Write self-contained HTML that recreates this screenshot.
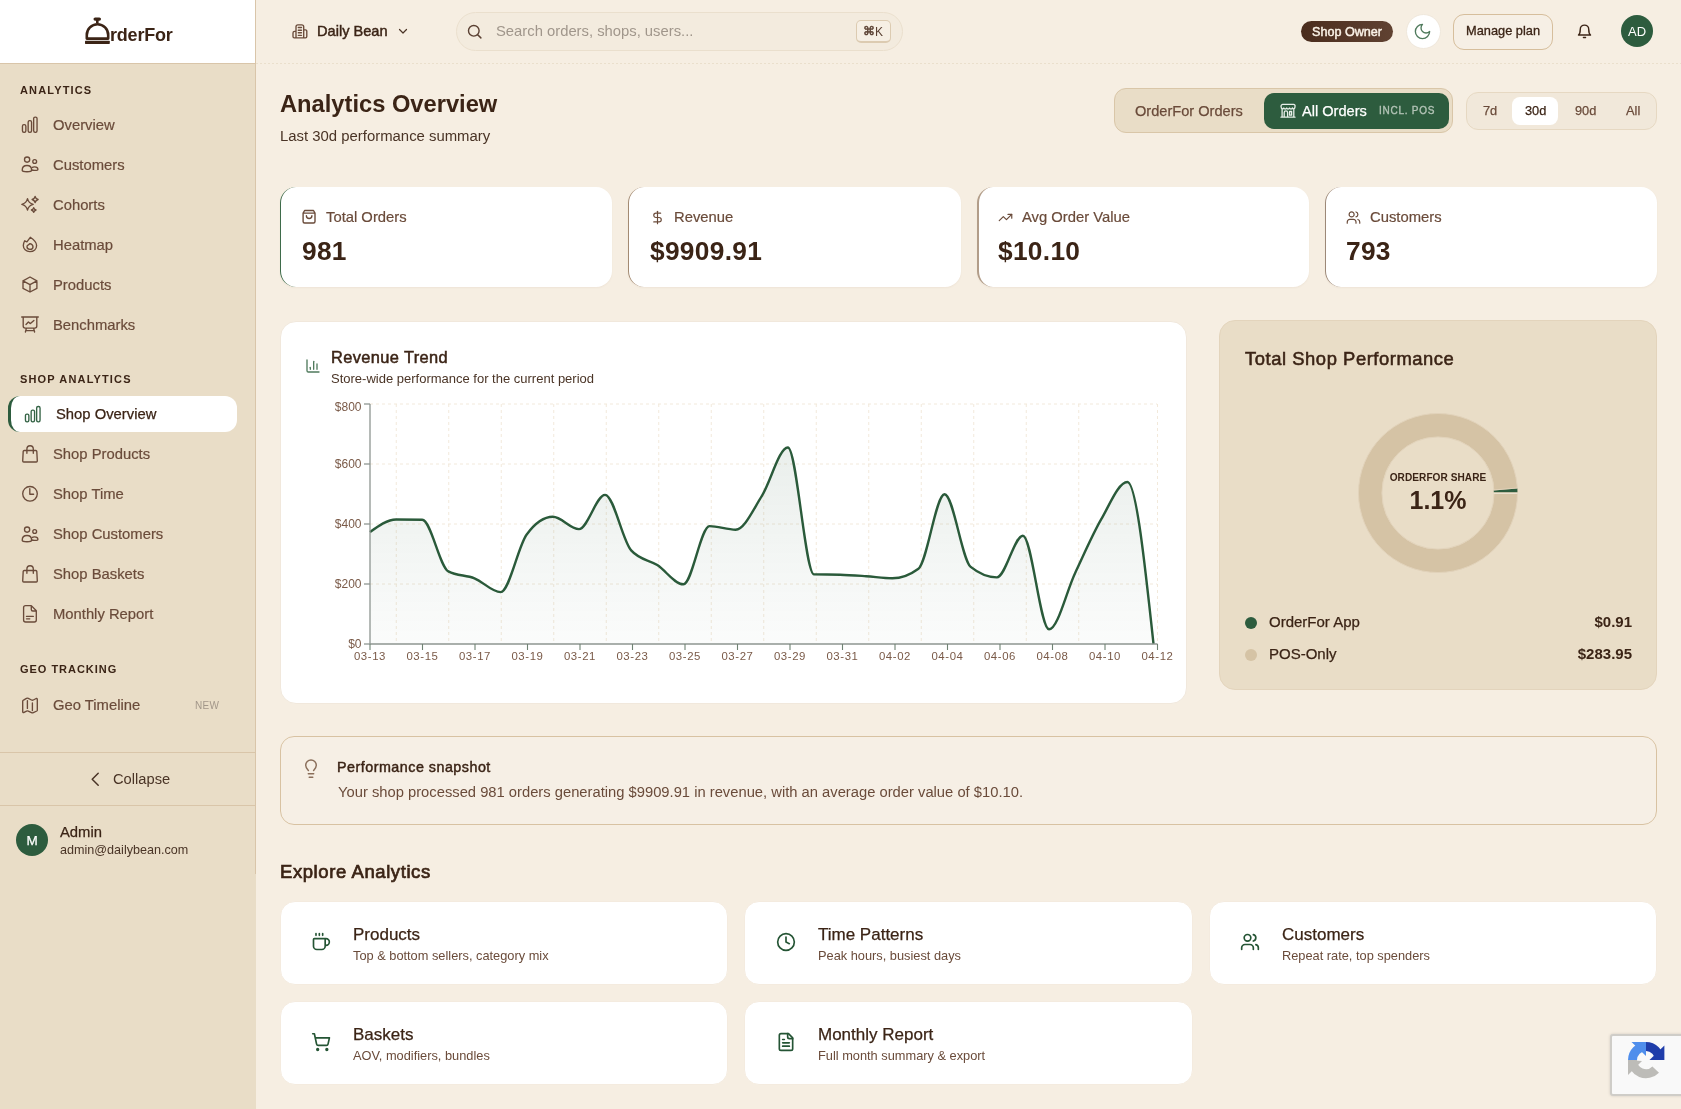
<!DOCTYPE html>
<html><head><meta charset="utf-8">
<style>
*{box-sizing:border-box;margin:0;padding:0}
html,body{width:1681px;height:1109px;overflow:hidden;background:#F6EEE2;font-family:"Liberation Sans",sans-serif;color:#3B2416}
.a{position:absolute}
.t{position:absolute;line-height:1;white-space:nowrap;will-change:transform}
svg{position:absolute;overflow:visible}
.ic{fill:none;stroke-linecap:round;stroke-linejoin:round}
#side{left:0;top:0;width:256px;height:1109px;background:#E9DDC7}
#sideborder{left:255px;top:0;width:1px;height:874px;background:#D9C5A9}
#logo{left:0;top:0;width:255px;height:63px;background:#fff}
#logoline{left:0;top:63px;width:255px;height:1px;background:#D9C5A9}
.sec{font-size:11px;font-weight:700;letter-spacing:1.15px;color:#3B2416}
.it{font-size:14.8px;color:#6A4B3A;-webkit-text-stroke:0.2px #6A4B3A}
.m{-webkit-text-stroke:0.25px currentColor}
.card{position:absolute;background:#fff;border-radius:16px}
</style></head><body>
<div id="side" class="a"></div>
<div id="logo" class="a"></div>
<div id="logoline" class="a"></div>
<div id="sideborder" class="a"></div>
<!-- header bottom dotted line -->
<div class="a" style="left:256px;top:63px;width:1425px;height:1px;background:repeating-linear-gradient(90deg,#EADFCC 0 2px,transparent 2px 4px)"></div>

<!-- Logo -->
<svg style="left:84px;top:16px" width="28" height="29" viewBox="0 0 28 29">
  <rect x="9.5" y="1.5" width="7.5" height="3.2" rx="1.6" fill="#3B2416"/>
  <rect x="12" y="3" width="2.6" height="4" fill="#3B2416"/>
  <path d="M2.8 22.6 V19 A10.7 10.7 0 0 1 24.2 19 V22.6 Z" fill="none" stroke="#3B2416" stroke-width="2.6" stroke-linejoin="round"/>
  <rect x="1" y="24.7" width="24.8" height="3.2" rx="0.6" fill="#3B2416"/>
</svg>
<div class="t" style="left:110px;top:25.5px;font-size:18px;font-weight:700;letter-spacing:-0.2px;color:#3B2416">rderFor</div>


<!-- Sidebar nav -->
<svg style="left:0;top:0;z-index:3" width="256" height="760" viewBox="0 0 256 760" class="ic" stroke="#6A4B3A" stroke-width="1.35">
 <rect x="22.45" y="124.65" width="3.4" height="7.7" rx="1.5"/><rect x="28.15" y="120.65" width="3.4" height="11.7" rx="1.5"/><rect x="33.65" y="117.05" width="3.4" height="15.3" rx="1.5"/>
 <g transform="translate(0 0)"><circle cx="27.1" cy="159.6" r="2.6"/><circle cx="34.7" cy="161.5" r="1.9"/>
<path d="M22.2 170.2 C22.2 167.2 24.4 165.5 27 165.5 C29.6 165.5 31.6 167.2 31.6 170.2 C31.6 171.6 29.5 171.7 27 171.7 C24.4 171.7 22.2 171.6 22.2 170.2Z"/>
<path d="M32.2 167.5 C32.8 166.9 33.6 166.8 34.6 166.8 C36.6 166.8 37.9 168.2 37.9 169.4 C37.9 170.2 36.4 170.3 34.6 170.3 C33.4 170.3 32.4 170.2 31.9 170"/></g>
 <path d="M27.5 198.70000000000002 Q28.6 203.3 33.2 204.4 Q28.6 205.5 27.5 210.1 Q26.4 205.5 21.8 204.4 Q26.4 203.3 27.5 198.70000000000002Z"/><path d="M35.1 196.5 Q35.7 198.9 38.1 199.5 Q35.7 200.1 35.1 202.5 Q34.5 200.1 32.1 199.5 Q34.5 198.9 35.1 196.5Z"/><path d="M33.7 207.7 Q34.2 209.5 36.0 210 Q34.2 210.5 33.7 212.3 Q33.2 210.5 31.400000000000002 210 Q33.2 209.5 33.7 207.7Z"/>
 <path d="M26.9 241.9 L30.3 237.3 C33 239.1 36.6 241.6 36.6 245.6 C36.6 249.1 33.8 251.6 29.9 251.6 C26 251.6 23.3 248.9 23.3 245.6 C23.3 243.6 24 242.1 24.7 240.8 Z"/>
 <path d="M27.2 245.8 L30 243.6 C31.8 244.1 33 245.6 33 246.9 C33 248.4 31.6 249.3 30 249.3 C28.4 249.3 27 248.3 27 246.8 Z"/>
 <path d="M30 277 L36.9 280.8 V288.4 L30 292 L23 288.4 V280.8 Z M23 280.8 L30 284.6 L36.9 280.8 M30 284.6 V292"/>
 <path d="M21.7 317 H38.3 M23.2 317 V326.1 A2 2 0 0 0 25.2 328.1 H34.8 A2 2 0 0 0 36.8 326.1 V317 M26.4 328.1 L25.4 332 M33.6 328.1 L34.6 332 M26.6 330.6 H33.4 M26 324.5 L28.4 322 L30.4 323.6 L33.9 320.4"/>
 <g stroke="#356446"><rect x="25.45" y="414.1" width="3.4" height="7.7" rx="1.5"/><rect x="31.15" y="410.1" width="3.4" height="11.7" rx="1.5"/><rect x="36.65" y="406.5" width="3.4" height="15.3" rx="1.5"/></g>
 <g transform="translate(0 0)"><path d="M24.2 450.5 H35.8 A1 1 0 0 1 36.8 451.4 L37.3 461 A1 1 0 0 1 36.3 462 H23.7 A1 1 0 0 1 22.7 461 L23.2 451.4 A1 1 0 0 1 24.2 450.5Z"/><path d="M26.9 453.3 V448.9 A3.2 3.2 0 0 1 33.3 448.9 V453.3"/></g>
 <circle cx="30" cy="493.8" r="7.3"/><path d="M29.8 488.6 V494.2 H33.6"/>
 <g transform="translate(0 370)"><circle cx="27.1" cy="159.6" r="2.6"/><circle cx="34.7" cy="161.5" r="1.9"/>
<path d="M22.2 170.2 C22.2 167.2 24.4 165.5 27 165.5 C29.6 165.5 31.6 167.2 31.6 170.2 C31.6 171.6 29.5 171.7 27 171.7 C24.4 171.7 22.2 171.6 22.2 170.2Z"/>
<path d="M32.2 167.5 C32.8 166.9 33.6 166.8 34.6 166.8 C36.6 166.8 37.9 168.2 37.9 169.4 C37.9 170.2 36.4 170.3 34.6 170.3 C33.4 170.3 32.4 170.2 31.9 170"/></g>
 <g transform="translate(0 120)"><path d="M24.2 450.5 H35.8 A1 1 0 0 1 36.8 451.4 L37.3 461 A1 1 0 0 1 36.3 462 H23.7 A1 1 0 0 1 22.7 461 L23.2 451.4 A1 1 0 0 1 24.2 450.5Z"/><path d="M26.9 453.3 V448.9 A3.2 3.2 0 0 1 33.3 448.9 V453.3"/></g>
 <path d="M25.6 605.6 H31.3 L36.3 610.8 V620 A2 2 0 0 1 34.3 622 H25.6 A2 2 0 0 1 23.6 620 V607.6 A2 2 0 0 1 25.6 605.6 Z M31.3 605.6 V609.5 A1.5 1.5 0 0 0 32.8 611 H36.3 M26.5 616.4 H33.3 M26.5 618.8 H29.8"/>
 <path d="M23.5 700.2 L26.5 698.4 A2 2 0 0 1 28.3 698.4 L31.5 700 A2 2 0 0 0 33.3 700 L36.2 698.5 A0.8 0.8 0 0 1 37.3 699.2 V710.2 A1 1 0 0 1 36.8 711 L33.3 712.7 A2 2 0 0 1 31.5 712.7 L28.3 711.1 A2 2 0 0 0 26.5 711.1 L23.6 712.6 A0.8 0.8 0 0 1 22.7 711.9 V701 A1 1 0 0 1 23.5 700.2Z M27.4 700.6 V708.4 M32.4 703 V710.5"/>
</svg>

<div class="t sec" style="left:20px;top:84.6px">ANALYTICS</div>
<div class="t it" style="left:52.5px;top:117.5px">Overview</div>
<div class="t it" style="left:52.5px;top:157.5px">Customers</div>
<div class="t it" style="left:52.5px;top:197.5px">Cohorts</div>
<div class="t it" style="left:52.5px;top:237.5px">Heatmap</div>
<div class="t it" style="left:52.5px;top:277.5px">Products</div>
<div class="t it" style="left:52.5px;top:317.5px">Benchmarks</div>

<div class="t sec" style="left:20px;top:374.2px">SHOP ANALYTICS</div>
<div class="a" style="left:8px;top:396px;width:229px;height:36px;background:#fff;border-radius:12px;border-left:3px solid #2D5C3E"></div>
<div class="t it" style="left:55.5px;top:406.9px;color:#3B2416;-webkit-text-stroke:0.25px #3B2416">Shop Overview</div>
<div class="t it" style="left:52.5px;top:446.9px">Shop Products</div>
<div class="t it" style="left:52.5px;top:486.9px">Shop Time</div>
<div class="t it" style="left:52.5px;top:526.9px">Shop Customers</div>
<div class="t it" style="left:52.5px;top:566.9px">Shop Baskets</div>
<div class="t it" style="left:52.5px;top:606.9px">Monthly Report</div>

<div class="t sec" style="left:20px;top:663.7px;letter-spacing:0.97px">GEO TRACKING</div>
<div class="t it" style="left:52.5px;top:698.1px">Geo Timeline</div>
<div class="t" style="left:195px;top:701px;font-size:10px;color:#A3978A;letter-spacing:0.3px">NEW</div>

<div class="a" style="left:0;top:752px;width:255px;height:1px;background:#D9C5A9"></div>
<svg style="left:0;top:700px" width="120" height="100" viewBox="0 700 120 100" class="ic" stroke="#4A3426" stroke-width="1.5"><path d="M98.2 773.2 L92.2 779.2 L98.2 785.2"/></svg>
<div class="t" style="left:112.5px;top:772px;font-size:14.7px;color:#4A3426">Collapse</div>
<div class="a" style="left:0;top:805px;width:255px;height:1px;background:#D9C5A9"></div>
<div class="a" style="left:16px;top:824px;width:32px;height:32px;border-radius:50%;background:#2D5C3E"></div>
<div class="t" style="left:16px;top:834px;width:32px;text-align:center;font-size:13.5px;color:#fff;-webkit-text-stroke:0.25px #fff">M</div>
<div class="t" style="left:60px;top:824.5px;font-size:14.8px;color:#3B2416;-webkit-text-stroke:0.25px #3B2416">Admin</div>
<div class="t" style="left:60px;top:843.5px;font-size:12.6px;color:#4A3426">admin@dailybean.com</div>

<!-- Header -->
<svg style="left:0;top:0" width="320" height="50" viewBox="0 0 320 50" class="ic" stroke="#6A4B3A" stroke-width="1.35"><path d="M296 37.8 V26.8 A2 2 0 0 1 298 24.8 H301.7 A2 2 0 0 1 303.7 26.8 V37.8 M303.7 29.8 H305.5 A1.3 1.3 0 0 1 306.8 31.1 V36.5 A1.3 1.3 0 0 1 305.5 37.8 H294.3 A1.3 1.3 0 0 1 293 36.5 V33 A1.6 1.6 0 0 1 294.6 31.4 H296 M298.3 27.5 H301.5 M298.3 30.2 H301.5 M298.3 32.7 H301.5 M298.3 35.3 H301.5"/></svg>
<div class="t" style="left:316.5px;top:23.8px;font-size:14.6px;color:#3B2416;-webkit-text-stroke:0.45px #3B2416">Daily Bean</div>
<svg style="left:397px;top:25px" width="12" height="12" viewBox="0 0 24 24" class="ic" stroke="#4A3426" stroke-width="2.4"><path d="m5 9 7 7 7-7"/></svg>

<div class="a" style="left:456px;top:12px;width:447px;height:39px;border-radius:20px;background:#F3EBDE;border:1px solid #EADFCD"></div>
<svg style="left:466px;top:23px" width="17" height="17" viewBox="0 0 24 24" class="ic" stroke="#5A4032" stroke-width="2"><circle cx="11" cy="11" r="7.5"/><path d="m21 21-4.5-4.5"/></svg>
<div class="t" style="left:496px;top:23.6px;font-size:14.8px;color:#A0968B">Search orders, shops, users...</div>
<div class="a" style="left:855.5px;top:20.3px;width:35.5px;height:22.5px;border-radius:5px;border:1.2px solid #DCCBB1;border-bottom-width:2px;background:#F6EFE4"></div>
<div class="t" style="left:862.5px;top:25.8px;font-size:11.5px;color:#5A4032;-webkit-text-stroke:0.5px #5A4032">&#8984;</div>
<div class="t" style="left:875px;top:26px;font-size:12px;color:#5A4032">K</div>

<div class="a" style="left:1301px;top:21px;width:92px;height:21px;border-radius:11px;background:linear-gradient(90deg,#4A2C1D,#604232)"></div>
<div class="t" style="left:1312px;top:25.5px;font-size:12.6px;font-weight:400;-webkit-text-stroke:0.45px #FBF3E8;color:#FBF3E8">Shop Owner</div>
<div class="a" style="left:1405.5px;top:14px;width:35px;height:35px;border-radius:50%;background:#fff;border:1px solid #F0E8DC"></div>
<svg style="left:1413px;top:21.5px" width="19" height="19" viewBox="0 0 24 24" class="ic" stroke="#4F7A5C" stroke-width="1.7"><path d="M12 3a6 6 0 0 0 9 9 9 9 0 1 1-9-9Z"/></svg>
<div class="a" style="left:1453px;top:14px;width:100px;height:36px;border-radius:11px;border:1px solid #D6BE9C;background:#F6EFE5"></div>
<div class="t" style="left:1466px;top:24.8px;font-size:12.8px;color:#3B2416;-webkit-text-stroke:0.3px #3B2416">Manage plan</div>
<svg style="left:1576px;top:23px" width="17" height="17" viewBox="0 0 24 24" class="ic" stroke="#3B2416" stroke-width="2"><path d="M6 9a6 6 0 0 1 12 0c0 6 2.5 8 2.5 8h-17S6 15 6 9"/><path d="M10.5 20.5h3"/></svg>
<div class="a" style="left:1621px;top:15px;width:32px;height:32px;border-radius:50%;background:#2D5C3E"></div>
<div class="t" style="left:1621px;top:25.3px;width:32px;text-align:center;font-size:13px;color:#fff">AD</div>

<!-- Title -->
<div class="t" style="left:280px;top:92.6px;font-size:23.7px;font-weight:700;color:#3B2416">Analytics Overview</div>
<div class="t" style="left:280px;top:129.0px;font-size:14.9px;color:#4A3426">Last 30d performance summary</div>

<!-- Toggle -->
<div class="a" style="left:1114px;top:88px;width:339px;height:45px;border-radius:12px;background:#E9DDC7;border:1px solid #D9C6A8"></div>
<div class="t" style="left:1135px;top:103.6px;font-size:14.6px;color:#6A4B3A;-webkit-text-stroke:0.25px #6A4B3A">OrderFor Orders</div>
<div class="a" style="left:1264px;top:93px;width:185px;height:36px;border-radius:10px;background:#2D5C3E"></div>
<svg style="left:0;top:0" width="1681" height="200" viewBox="0 0 1681 200" class="ic" stroke="#E8EFE9" stroke-width="1.3"><path d="M1282.6 104.3 H1293.6 A1.6 1.6 0 0 1 1295 106.5 C1295 108.2 1294.2 108.8 1293.5 108.8 C1292.6 108.8 1292.4 108 1292.4 108 C1292.2 108.8 1291.6 109 1291 109 C1290.2 109 1289.8 108.4 1289.6 108 C1289.4 108.6 1288.8 109 1288 109 C1287.3 109 1286.9 108.6 1286.7 108 C1286.5 108.6 1286 109 1285.2 109 C1284.4 109 1284 108.4 1283.8 108 C1283.6 108.6 1283.1 108.8 1282.5 108.8 C1281.6 108.8 1281.1 108 1281.1 106.8 A2 2 0 0 1 1282.6 104.3Z M1282.1 109 V117.2 M1293.8 109 V117.2 M1281 117.2 H1295 M1284.2 117.2 V112.6 A1.7 1.7 0 0 1 1287.6 112.6 V117.2 M1289.6 111.5 H1291.6 V115.2 H1289.6Z"/></svg>
<div class="t" style="left:1302px;top:103.6px;font-size:14.6px;color:#fff;-webkit-text-stroke:0.25px #fff">All Orders</div>
<div class="t" style="left:1378.5px;top:106.4px;font-size:10px;font-weight:400;-webkit-text-stroke:0.35px #B3C3B6;letter-spacing:0.75px;color:#B3C3B6">INCL. POS</div>

<div class="a" style="left:1466px;top:92px;width:191px;height:38px;border-radius:12px;background:#F1E8DA;border:1px solid #E6D8C2"></div>
<div class="a" style="left:1512px;top:97px;width:46px;height:28px;border-radius:8px;background:#fff"></div>
<div class="t" style="left:1482.5px;top:104.9px;font-size:12.8px;color:#6A4B3A;-webkit-text-stroke:0.25px #6A4B3A">7d</div>
<div class="t" style="left:1524.5px;top:104.9px;font-size:12.8px;color:#3B2416;-webkit-text-stroke:0.25px #3B2416">30d</div>
<div class="t" style="left:1575px;top:104.9px;font-size:12.8px;color:#6A4B3A;-webkit-text-stroke:0.25px #6A4B3A">90d</div>
<div class="t" style="left:1625.5px;top:104.9px;font-size:12.8px;color:#6A4B3A;-webkit-text-stroke:0.25px #6A4B3A">All</div>
<div class="card" style="left:280px;top:187px;width:332.25px;height:100px;border-left:1.5px solid #3E6B4A;box-shadow:0 1px 2px rgba(120,90,50,0.06)"></div>
<svg style="left:0;top:0" width="330" height="240" viewBox="0 0 330 240" class="ic" stroke="#6A4B3A" stroke-width="1.4"><path d="M304.6 210.5 H313.5 L315 213.1 V221.5 A1.5 1.5 0 0 1 313.5 223 H304.6 A1.5 1.5 0 0 1 303.1 221.5 V213.1 Z M303.1 213.1 H315 M306.4 215.7 A2.75 2.75 0 0 0 311.9 215.7"/></svg>
<div class="t" style="left:325.5px;top:210.4px;font-size:14.8px;color:#6A4B3A;-webkit-text-stroke:0.2px #6A4B3A">Total Orders</div>
<div class="t" style="left:301.5px;top:237.8px;font-size:26.3px;font-weight:700;letter-spacing:0.3px;color:#3B2416">981</div>
<div class="card" style="left:628.25px;top:187px;width:332.25px;height:100px;border-left:1.5px solid #A38A72;box-shadow:0 1px 2px rgba(120,90,50,0.06)"></div>
<svg style="left:649.75px;top:209.5px" width="15" height="15" viewBox="0 0 24 24" class="ic" stroke="#6A4B3A" stroke-width="1.9"><path d="M12 2v20"/><path d="M17 5H9.5a3.5 3.5 0 0 0 0 7h5a3.5 3.5 0 0 1 0 7H6"/></svg>
<div class="t" style="left:673.75px;top:210.4px;font-size:14.8px;color:#6A4B3A;-webkit-text-stroke:0.2px #6A4B3A">Revenue</div>
<div class="t" style="left:649.75px;top:237.8px;font-size:26.3px;font-weight:700;letter-spacing:0.3px;color:#3B2416">$9909.91</div>
<div class="card" style="left:976.5px;top:187px;width:332.25px;height:100px;border-left:2px solid #B29D89;box-shadow:0 1px 2px rgba(120,90,50,0.06)"></div>
<svg style="left:998.0px;top:209.5px" width="15" height="15" viewBox="0 0 24 24" class="ic" stroke="#6A4B3A" stroke-width="1.9"><path d="M22 7l-8.5 8.5-5-5L2 17"/><path d="M16 7h6v6"/></svg>
<div class="t" style="left:1022.0px;top:210.4px;font-size:14.8px;color:#6A4B3A;-webkit-text-stroke:0.2px #6A4B3A">Avg Order Value</div>
<div class="t" style="left:998.0px;top:237.8px;font-size:26.3px;font-weight:700;letter-spacing:0.3px;color:#3B2416">$10.10</div>
<div class="card" style="left:1324.75px;top:187px;width:332.25px;height:100px;border-left:1.2px solid #9C8878;box-shadow:0 1px 2px rgba(120,90,50,0.06)"></div>
<svg style="left:1346.25px;top:209.5px" width="15" height="15" viewBox="0 0 24 24" class="ic" stroke="#6A4B3A" stroke-width="1.9"><path d="M16 21v-2a4 4 0 0 0-4-4H6a4 4 0 0 0-4 4v2"/><circle cx="9" cy="7" r="4"/><path d="M22 21v-2a4 4 0 0 0-3-3.87"/><path d="M16 3.13a4 4 0 0 1 0 7.75"/></svg>
<div class="t" style="left:1370.25px;top:210.4px;font-size:14.8px;color:#6A4B3A;-webkit-text-stroke:0.2px #6A4B3A">Customers</div>
<div class="t" style="left:1346.25px;top:237.8px;font-size:26.3px;font-weight:700;letter-spacing:0.3px;color:#3B2416">793</div>

<!-- Chart card -->
<div class="card" style="left:280px;top:320.5px;width:907px;height:383px;border:1px solid #F1E8DC"></div>
<svg style="left:304.5px;top:357.5px" width="16" height="16" viewBox="0 0 24 24" class="ic" stroke="#4F7A5C" stroke-width="2"><path d="M3 3v16a2 2 0 0 0 2 2h16"/><path d="M18 17V9"/><path d="M13 17V5"/><path d="M8 17v-3"/></svg>
<div class="t" style="left:331px;top:348.5px;font-size:16.4px;font-weight:400;letter-spacing:0.38px;-webkit-text-stroke:0.5px #3B2416;color:#3B2416">Revenue Trend</div>
<div class="t" style="left:331px;top:372px;font-size:13px;color:#4A3426">Store-wide performance for the current period</div>
<svg style="left:0;top:0" width="1681" height="1109" viewBox="0 0 1681 1109">
 <defs><linearGradient id="g1" x1="0" y1="0" x2="0" y2="1"><stop offset="0" stop-color="#2D5C3E" stop-opacity="0.10"/><stop offset="1" stop-color="#2D5C3E" stop-opacity="0.02"/></linearGradient></defs>
 <g stroke="#F2E9DB" stroke-width="1" stroke-dasharray="3 3" fill="none">
  <path d="M370 404H1157M370 464H1157M370 524H1157M370 584H1157"/>
  <path d="M396.25 404V644"/><path d="M448.75 404V644"/><path d="M501.25 404V644"/><path d="M553.75 404V644"/><path d="M606.25 404V644"/><path d="M658.75 404V644"/><path d="M711.25 404V644"/><path d="M763.75 404V644"/><path d="M816.25 404V644"/><path d="M868.75 404V644"/><path d="M921.25 404V644"/><path d="M973.75 404V644"/><path d="M1026.25 404V644"/><path d="M1078.75 404V644"/><path d="M1157.50 404V644"/>
 </g>
 <path d="M370.00,532.10C378.71,525.80,387.41,519.50,396.12,519.50C404.82,519.50,413.53,519.60,422.23,519.80C430.94,520.00,439.65,566.80,448.35,571.40C457.06,576.00,465.76,574.85,474.47,578.30C483.17,581.75,491.88,592.10,500.59,592.10C509.29,592.10,518.00,546.30,526.70,534.50C535.41,522.70,544.11,516.80,552.82,516.80C561.52,516.80,570.23,529.10,578.94,529.10C587.64,529.10,596.35,494.90,605.05,494.90C613.76,494.90,622.46,540.60,631.17,550.40C639.88,560.20,648.58,559.45,657.29,565.10C665.99,570.75,674.70,584.30,683.40,584.30C692.11,584.30,700.82,526.10,709.52,526.10C718.23,526.10,726.93,529.70,735.64,529.70C744.34,529.70,753.05,509.80,761.75,496.10C770.46,482.40,779.17,447.50,787.87,447.50C796.58,447.50,805.28,574.20,813.99,574.40C822.69,574.60,831.40,574.50,840.11,574.70C848.81,574.90,857.52,575.60,866.22,576.20C874.93,576.80,883.63,578.30,892.34,578.30C901.05,578.30,909.75,575.10,918.46,568.70C927.16,562.30,935.87,494.30,944.57,494.30C953.28,494.30,961.99,559.90,970.69,566.90C979.40,573.90,988.10,577.40,996.81,577.40C1005.51,577.40,1014.22,535.70,1022.93,535.70C1031.63,535.70,1040.34,629.30,1049.04,629.30C1057.75,629.30,1066.45,591.25,1075.16,572.90C1083.86,554.55,1092.57,534.35,1101.28,519.20C1109.98,504.05,1118.69,482.00,1127.39,482.00C1136.10,482.00,1144.80,563.00,1153.51,644.00L1153.51,644.00L370.00,644.00Z" fill="url(#g1)"/>
 <path d="M370.00,532.10C378.71,525.80,387.41,519.50,396.12,519.50C404.82,519.50,413.53,519.60,422.23,519.80C430.94,520.00,439.65,566.80,448.35,571.40C457.06,576.00,465.76,574.85,474.47,578.30C483.17,581.75,491.88,592.10,500.59,592.10C509.29,592.10,518.00,546.30,526.70,534.50C535.41,522.70,544.11,516.80,552.82,516.80C561.52,516.80,570.23,529.10,578.94,529.10C587.64,529.10,596.35,494.90,605.05,494.90C613.76,494.90,622.46,540.60,631.17,550.40C639.88,560.20,648.58,559.45,657.29,565.10C665.99,570.75,674.70,584.30,683.40,584.30C692.11,584.30,700.82,526.10,709.52,526.10C718.23,526.10,726.93,529.70,735.64,529.70C744.34,529.70,753.05,509.80,761.75,496.10C770.46,482.40,779.17,447.50,787.87,447.50C796.58,447.50,805.28,574.20,813.99,574.40C822.69,574.60,831.40,574.50,840.11,574.70C848.81,574.90,857.52,575.60,866.22,576.20C874.93,576.80,883.63,578.30,892.34,578.30C901.05,578.30,909.75,575.10,918.46,568.70C927.16,562.30,935.87,494.30,944.57,494.30C953.28,494.30,961.99,559.90,970.69,566.90C979.40,573.90,988.10,577.40,996.81,577.40C1005.51,577.40,1014.22,535.70,1022.93,535.70C1031.63,535.70,1040.34,629.30,1049.04,629.30C1057.75,629.30,1066.45,591.25,1075.16,572.90C1083.86,554.55,1092.57,534.35,1101.28,519.20C1109.98,504.05,1118.69,482.00,1127.39,482.00C1136.10,482.00,1144.80,563.00,1153.51,644.00" fill="none" stroke="#2A5A3A" stroke-width="2.4"/>
 <g stroke="#8E9691" stroke-width="1.3" fill="none">
  <path d="M370 404V644M370 644H1157.5"/>
  <path d="M364 404H370"/><path d="M364 464H370"/><path d="M364 524H370"/><path d="M364 584H370"/><path d="M364 644H370"/>
  
 </g>
 <g stroke="#6F8273" stroke-width="1.1" fill="none"><path d="M370.00 644V650"/><path d="M422.50 644V650"/><path d="M475.00 644V650"/><path d="M527.50 644V650"/><path d="M580.00 644V650"/><path d="M632.50 644V650"/><path d="M685.00 644V650"/><path d="M737.50 644V650"/><path d="M790.00 644V650"/><path d="M842.50 644V650"/><path d="M895.00 644V650"/><path d="M947.50 644V650"/><path d="M1000.00 644V650"/><path d="M1052.50 644V650"/><path d="M1105.00 644V650"/><path d="M1157.50 644V650"/></g>
 <g font-family="Liberation Sans" font-size="12" fill="#7A5A48" text-anchor="end">
  <text x="361.5" y="411">$800</text><text x="361.5" y="468">$600</text><text x="361.5" y="528">$400</text><text x="361.5" y="588">$200</text><text x="361.5" y="648">$0</text>
 </g>
 <g font-family="Liberation Sans" font-size="11.4" fill="#7A5A48" text-anchor="middle" letter-spacing="0.6">
  <text x="370.00" y="660">03-13</text><text x="422.50" y="660">03-15</text><text x="475.00" y="660">03-17</text><text x="527.50" y="660">03-19</text><text x="580.00" y="660">03-21</text><text x="632.50" y="660">03-23</text><text x="685.00" y="660">03-25</text><text x="737.50" y="660">03-27</text><text x="790.00" y="660">03-29</text><text x="842.50" y="660">03-31</text><text x="895.00" y="660">04-02</text><text x="947.50" y="660">04-04</text><text x="1000.00" y="660">04-06</text><text x="1052.50" y="660">04-08</text><text x="1105.00" y="660">04-10</text><text x="1157.50" y="660">04-12</text>
 </g>
</svg>

<!-- Donut panel -->
<div class="a" style="left:1219px;top:320px;width:438px;height:370px;border-radius:16px;background:#E9DDC7;border:1px solid #E3D4BC"></div>
<div class="t" style="left:1245px;top:350px;font-size:18.4px;font-weight:400;letter-spacing:0.55px;-webkit-text-stroke:0.55px #3B2416;color:#3B2416">Total Shop Performance</div>
<svg style="left:1358px;top:413px" width="160" height="160" viewBox="0 0 160 160">
  <circle cx="80" cy="80" r="67.8" fill="none" stroke="#D5C3A5" stroke-width="23.4"/>
  <circle cx="80" cy="80" r="79.5" fill="none" stroke="#E2D3BB" stroke-width="1"/>
  <circle cx="80" cy="80" r="56.1" fill="none" stroke="#E2D3BB" stroke-width="1"/>
  <path d="M135.8 77.6 L159.4 75.6 L159.4 79.2 L135.8 79.2 Z" fill="#2D5C3E"/>
  <path d="M135.8 80.3 H159.4" stroke="#EDE3D2" stroke-width="1.3"/>
  <path d="M135.8 77.0 L159.4 75.0" stroke="#E4D6C0" stroke-width="0.8"/>
</svg>
<div class="t" style="left:1338px;top:473px;width:200px;text-align:center;font-size:10.1px;font-weight:700;letter-spacing:0.05px;color:#3B2416">ORDERFOR SHARE</div>
<div class="t" style="left:1338px;top:487.8px;width:200px;text-align:center;font-size:25px;font-weight:700;color:#3B2416">1.1%</div>
<div class="a" style="left:1244.5px;top:617px;width:12px;height:12px;border-radius:50%;background:#2D5C3E"></div>
<div class="t" style="left:1268.5px;top:614.3px;font-size:15px;color:#3B2416;-webkit-text-stroke:0.25px #3B2416">OrderFor App</div>
<div class="t" style="left:1432px;top:614.3px;width:200px;text-align:right;font-size:15px;font-weight:700;color:#3B2416">$0.91</div>
<div class="a" style="left:1244.5px;top:649px;width:12px;height:12px;border-radius:50%;background:#D5C3A5"></div>
<div class="t" style="left:1268.5px;top:646.3px;font-size:15px;color:#3B2416;-webkit-text-stroke:0.25px #3B2416">POS-Only</div>
<div class="t" style="left:1432px;top:646.3px;width:200px;text-align:right;font-size:15px;font-weight:700;color:#3B2416">$283.95</div>

<!-- Snapshot -->
<div class="a" style="left:280px;top:736px;width:1377px;height:89px;border-radius:14px;border:1px solid #D8C2A2;background:#F6EFE5"></div>
<svg style="left:0;top:0;z-index:2" width="330" height="800" viewBox="0 0 330 800" class="ic" stroke="#8A6E5A" stroke-width="1.45"><path d="M308.4 770.4 C307 768.8 305.7 767.6 305.7 765.3 A5.3 5.3 0 0 1 316.3 765.3 C316.3 767.6 315 768.8 313.6 770.4 M308.3 773.8 H313.7 M309.2 777.3 H312.8"/></svg>
<div class="t" style="left:336.8px;top:760px;font-size:14.3px;font-weight:400;letter-spacing:0.5px;-webkit-text-stroke:0.45px #3B2416;color:#3B2416">Performance snapshot</div>
<div class="t" style="left:337.5px;top:784.6px;font-size:14.75px;color:#6A4B3A">Your shop processed 981 orders generating $9909.91 in revenue, with an average order value of $10.10.</div>

<!-- Explore -->
<div class="t" style="left:280px;top:862.9px;font-size:18.5px;font-weight:400;letter-spacing:0.58px;-webkit-text-stroke:0.7px #3B2416;color:#3B2416">Explore Analytics</div>
<div class="card" style="left:280px;top:901px;width:448.33px;height:84px;border-radius:15px;border:1px solid #F4EBDF"></div>
<svg style="left:311.20px;top:931.80px" width="20" height="20" viewBox="0 0 24 24" class="ic" stroke="#245434" stroke-width="2"><path d="M10 2v2"/><path d="M14 2v2"/><path d="M6 2v2"/><path d="M16 8a1 1 0 0 1 1 1v8a4 4 0 0 1-4 4H7a4 4 0 0 1-4-4V9a1 1 0 0 1 1-1h14a4 4 0 1 1 0 8h-1"/></svg>
<div class="t" style="left:353.40px;top:925.6px;font-size:17px;color:#3B2416;-webkit-text-stroke:0.25px #3B2416">Products</div>
<div class="t" style="left:353.40px;top:949.9px;font-size:12.8px;color:#6A4B3A">Top &amp; bottom sellers, category mix</div>
<div class="card" style="left:744.33px;top:901px;width:448.33px;height:84px;border-radius:15px;border:1px solid #F4EBDF"></div>
<svg style="left:775.53px;top:931.80px" width="20" height="20" viewBox="0 0 24 24" class="ic" stroke="#245434" stroke-width="2"><circle cx="12" cy="12" r="10"/><path d="M12 6v6l4 2"/></svg>
<div class="t" style="left:817.73px;top:925.6px;font-size:17px;color:#3B2416;-webkit-text-stroke:0.25px #3B2416">Time Patterns</div>
<div class="t" style="left:817.73px;top:949.9px;font-size:12.8px;color:#6A4B3A">Peak hours, busiest days</div>
<div class="card" style="left:1208.67px;top:901px;width:448.33px;height:84px;border-radius:15px;border:1px solid #F4EBDF"></div>
<svg style="left:1239.87px;top:931.80px" width="20" height="20" viewBox="0 0 24 24" class="ic" stroke="#245434" stroke-width="2"><path d="M16 21v-2a4 4 0 0 0-4-4H6a4 4 0 0 0-4 4v2"/><circle cx="9" cy="7" r="4"/><path d="M22 21v-2a4 4 0 0 0-3-3.87"/><path d="M16 3.13a4 4 0 0 1 0 7.75"/></svg>
<div class="t" style="left:1282.07px;top:925.6px;font-size:17px;color:#3B2416;-webkit-text-stroke:0.25px #3B2416">Customers</div>
<div class="t" style="left:1282.07px;top:949.9px;font-size:12.8px;color:#6A4B3A">Repeat rate, top spenders</div>
<div class="card" style="left:280px;top:1001px;width:448.33px;height:84px;border-radius:15px;border:1px solid #F4EBDF"></div>
<svg style="left:311.20px;top:1031.80px" width="20" height="20" viewBox="0 0 24 24" class="ic" stroke="#245434" stroke-width="2"><circle cx="8" cy="21" r="1"/><circle cx="19" cy="21" r="1"/><path d="M2.05 2.05h2l2.66 12.42a2 2 0 0 0 2 1.58h9.78a2 2 0 0 0 1.95-1.57l1.65-7.43H5.12"/></svg>
<div class="t" style="left:353.40px;top:1025.6px;font-size:17px;color:#3B2416;-webkit-text-stroke:0.25px #3B2416">Baskets</div>
<div class="t" style="left:353.40px;top:1049.9px;font-size:12.8px;color:#6A4B3A">AOV, modifiers, bundles</div>
<div class="card" style="left:744.33px;top:1001px;width:448.33px;height:84px;border-radius:15px;border:1px solid #F4EBDF"></div>
<svg style="left:775.53px;top:1031.80px" width="20" height="20" viewBox="0 0 24 24" class="ic" stroke="#245434" stroke-width="2"><path d="M15 2H6a2 2 0 0 0-2 2v16a2 2 0 0 0 2 2h12a2 2 0 0 0 2-2V7Z"/><path d="M14 2v4a2 2 0 0 0 2 2h4"/><path d="M10 9H8"/><path d="M16 13H8"/><path d="M16 17H8"/></svg>
<div class="t" style="left:817.73px;top:1025.6px;font-size:17px;color:#3B2416;-webkit-text-stroke:0.25px #3B2416">Monthly Report</div>
<div class="t" style="left:817.73px;top:1049.9px;font-size:12.8px;color:#6A4B3A">Full month summary &amp; export</div>

<!-- recaptcha -->
<div class="a" style="left:1610px;top:1034px;width:80px;height:62px;background:#F9F9F9;border-radius:3px;border:2px solid #CFCDC8;box-shadow:0 0 3px rgba(0,0,0,0.15)"></div>
<svg style="left:1600px;top:1025px" width="81" height="84" viewBox="0 0 81 84">
  <path d="M46 17 A18 18 0 0 1 64 35 L55 35 A9 9 0 0 0 46 26 Z" fill="#1F3DAA"/>
  <path d="M64.4 20.5 V35 H49.5 Z" fill="#1F3DAA"/>
  <path d="M46 17 A18 18 0 0 0 28 35 L37 35 A9 9 0 0 1 46 26 Z" fill="#4F8EEC"/>
  <path d="M31.5 17 H46 V31 Z" fill="#4F8EEC"/>
  <path d="M28 35 A18 18 0 0 0 59 47.7 L52.4 41.4 A9 9 0 0 1 37 35 Z" fill="#BDBCB8"/>
  <path d="M28 35 V50 L42 36 Z" fill="#BDBCB8"/>
</svg>
</body></html>
